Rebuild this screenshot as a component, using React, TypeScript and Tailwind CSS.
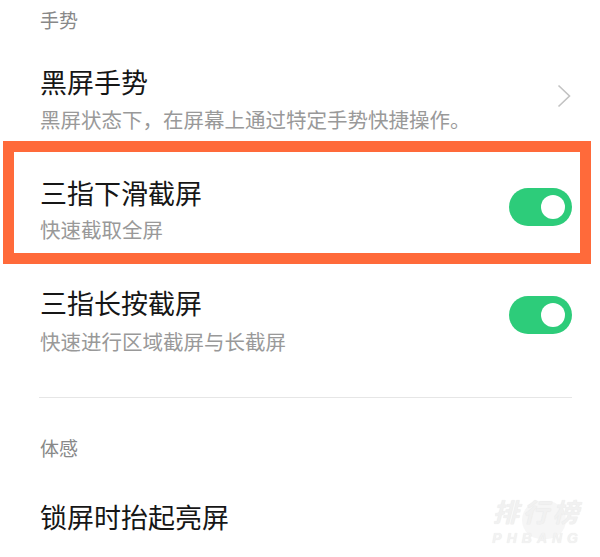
import React from "react";

const font = { fontFamily: '"Noto Sans CJK SC", "Noto Sans", sans-serif' };

function Toggle() {
  return (
    <div className="w-[63px] h-[38px] rounded-full bg-[#2dcc7a] flex items-center justify-end pr-[7px] shrink-0">
      <div className="w-[24px] h-[24px] rounded-full bg-white" />
    </div>
  );
}

export default function App() {
  return (
    <div className="relative w-[600px] h-[557px] bg-white overflow-hidden" style={font}>
      {/* Header 手势 */}
      <div className="h-[39px] flex items-center pl-[40px] text-[19px] leading-none text-[#888888]">手势</div>

      {/* 黑屏手势 */}
      <div className="flex items-center justify-between pl-[40px] pr-[29px] pt-[26px] pb-[8px]">
        <div className="flex flex-col">
          <div className="h-[34px] leading-[34px] text-[27px] text-[#161616]">黑屏手势</div>
          <div className="mt-[6px] h-[28px] leading-[28px] text-[20.5px] text-[#999999]">
            黑屏状态下，在屏幕上通过特定手势快捷操作。
          </div>
        </div>
        <svg width="14" height="24" viewBox="0 0 14 24" className="-mt-[6px]">
          <polyline points="1.5,1.5 12.5,12 1.5,22.5" fill="none" stroke="#c2c2c2" strokeWidth="1.6" />
        </svg>
      </div>

      {/* Highlighted row */}
      <div className="ml-[3px] mr-[9px] border-[11px] border-[#ff6a3a]">
        <div className="flex items-center justify-between pl-[26px] pr-[8px] pt-[24px] pb-[10px]">
          <div className="flex flex-col">
            <div className="h-[34px] leading-[34px] text-[27px] text-[#161616]">三指下滑截屏</div>
            <div className="mt-[5px] h-[28px] leading-[28px] text-[20.5px] text-[#999999]">快速截取全屏</div>
          </div>
          <div className="-mt-[5px]">
            <Toggle />
          </div>
        </div>
      </div>

      {/* 三指长按截屏 */}
      <div className="flex items-center justify-between pl-[40px] pr-[28px] pt-[22px]">
        <div className="flex flex-col">
          <div className="h-[34px] leading-[34px] text-[27px] text-[#161616]">三指长按截屏</div>
          <div className="mt-[7px] h-[28px] leading-[28px] text-[20.5px] text-[#999999]">快速进行区域截屏与长截屏</div>
        </div>
        <div className="-mt-[12px]">
          <Toggle />
        </div>
      </div>

      {/* Divider */}
      <div className="mt-[42px] ml-[39px] mr-[28px] h-px bg-[#e6e6e6]" />

      {/* Header 体感 */}
      <div className="mt-[39px] h-[20px] flex items-center pl-[40px] text-[19px] leading-none text-[#888888]">体感</div>

      {/* 锁屏时抬起亮屏 */}
      <div className="mt-[43px] pl-[40px] h-[34px] leading-[34px] text-[27px] text-[#161616]">锁屏时抬起亮屏</div>

      {/* Watermark */}
      <div className="absolute right-[17px] bottom-[12px] flex flex-col items-center select-none">
        <div className="absolute left-[30px] top-[4px] w-[44px] h-[38px] rounded-full bg-[#f6f6f6]" />
        <div
          className="relative h-[28px] text-[26px] leading-[28px] font-bold italic text-[#f1f1f1] tracking-[4px]"
          style={{ textShadow: "0 0 1px #e4e4e4" }}
        >
          排行榜
        </div>
        <div
          className="relative mt-[6px] h-[14px] text-[14px] leading-[14px] font-black italic text-[#f2f2f2] tracking-[5px]"
          style={{ fontFamily: '"Liberation Sans", sans-serif', textShadow: "0 0 1px #e6e6e6" }}
        >
          PHBANG
        </div>
      </div>
    </div>
  );
}
